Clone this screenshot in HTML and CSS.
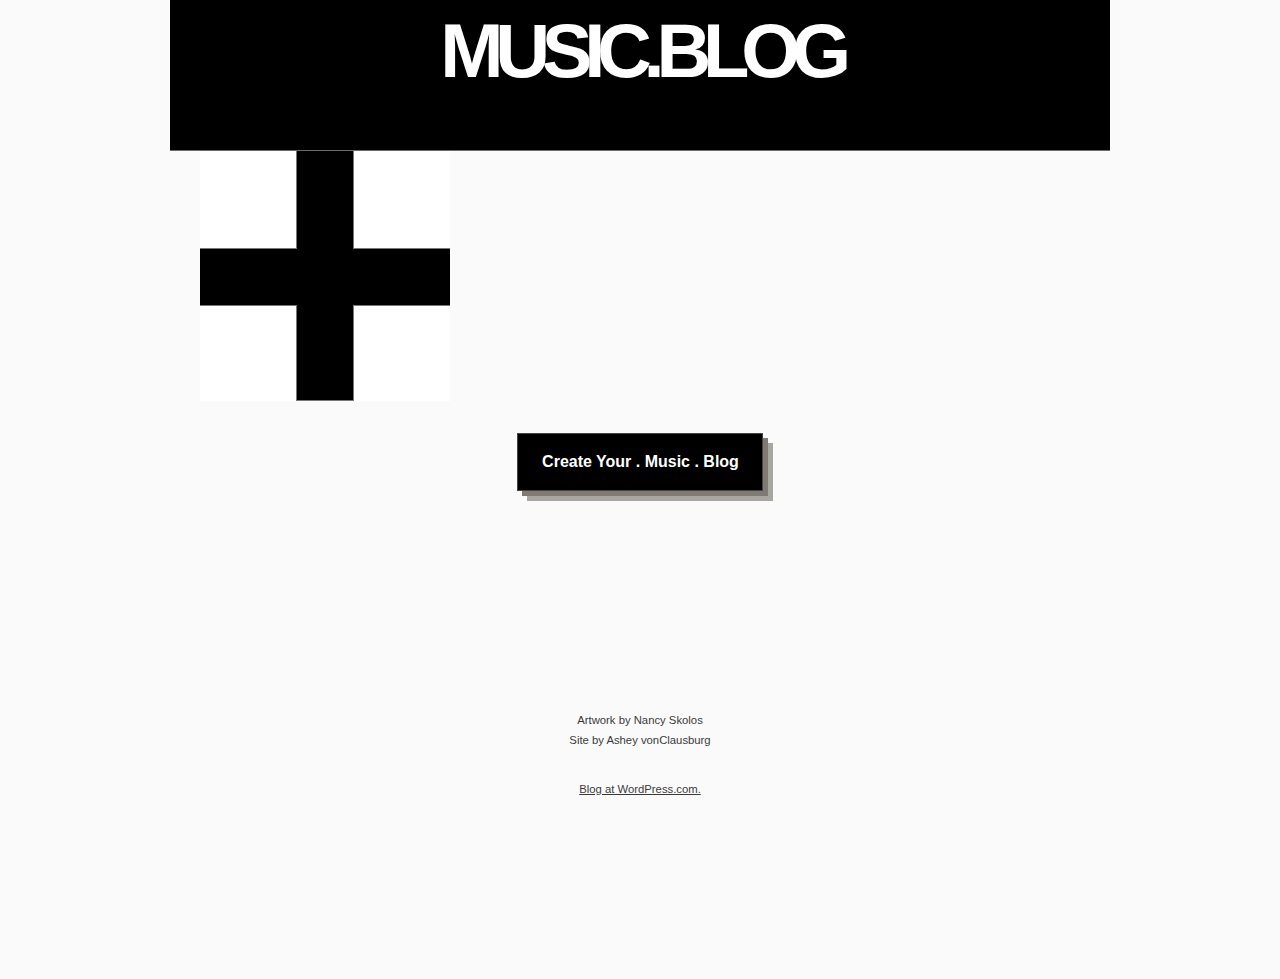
FILE: index.html
```html
<!DOCTYPE html>
<html lang="en">
<head>
<meta charset="utf-8">
<title>MUSIC.BLOG</title>
<link rel="stylesheet" href="styles.css">
</head>
<body>
<div class="page">
  <header class="masthead">
    <h1 class="site-title">MUSIC.BLOG</h1>
  </header>
  <main class="content">
    <div class="artwork">
      <svg width="250" height="250" viewBox="0 0 250 250" aria-hidden="true">
        <rect x="0" y="0" width="250" height="250" fill="#ffffff"/>
        <rect x="96.5" y="0" width="57" height="249.5" fill="#000" stroke="#777" stroke-width="1"/>
        <rect x="0" y="97.5" width="250" height="57" fill="#000" stroke="#777" stroke-width="1"/>
        <rect x="97" y="0" width="56" height="249" fill="#000"/>
        <rect x="0" y="98" width="250" height="56" fill="#000"/>
      </svg>
    </div>
    <div class="cta-row">
      <a class="cta" href="#">Create Your . Music . Blog</a>
    </div>
  </main>
  <footer class="site-footer">
    <p class="credits">Artwork by Nancy Skolos<br>Site by Ashey vonClausburg</p>
    <p class="powered"><a href="#">Blog at WordPress.com.</a></p>
  </footer>
</div>
</body>
</html>
```
FILE: styles.css
```css
html, body {
  margin: 0;
  padding: 0;
  background: #fafafa;
}
body {
  font-family: "Liberation Sans", Arial, sans-serif;
  color: #333;
}
.page {
  width: 940px;
  margin: 0 auto;
  min-height: 979px;
}
.masthead {
  background: #000;
  height: 150px;
  border-bottom: 1px solid #6b6b6b;
}
.site-title {
  margin: 0;
  padding-top: 13px;
  text-align: center;
  color: #fff;
  font-size: 76px;
  line-height: 1;
  font-weight: 700;
  letter-spacing: -8.3px;
  text-indent: 3px;
}
.content {
  display: flex;
  flex-direction: column;
}
.artwork {
  margin-left: 30px;
  width: 250px;
  height: 250px;
}
.artwork svg {
  display: block;
}
.cta-row {
  display: flex;
  justify-content: center;
  margin-top: 32px;
}
.cta {
  display: block;
  background: #000;
  color: #fff;
  font-weight: 700;
  font-size: 16px;
  line-height: 19px;
  padding: 18px 23px 19px 24px;
  text-decoration: none;
  border: 1px solid #444;
  box-shadow: 5px 5px 0 #7f7b74, 10px 10px 0 #a8a6a0;
}
.site-footer {
  margin-top: 219px;
  text-align: center;
  font-size: 11.3px;
  color: #3a3a3a;
}
.credits {
  margin: 0;
  line-height: 20px;
}
.powered {
  margin: 29px 0 0;
  line-height: 20px;
}
.powered a {
  color: #3a3a3a;
  text-decoration: underline;
}
```
